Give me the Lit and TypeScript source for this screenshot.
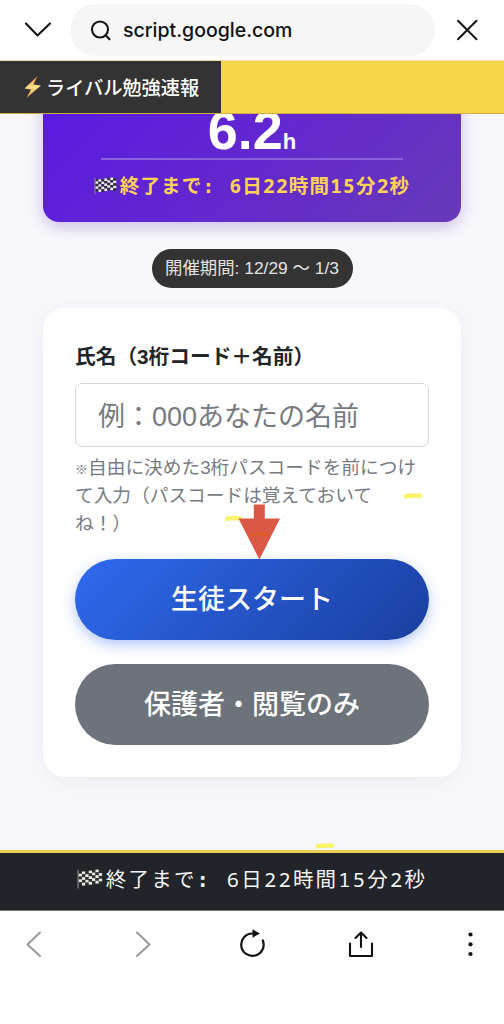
import { LitElement, html, svg, css } from "lit";
import { customElement, property } from "lit/decorators.js";

@customElement("checkered-flag")
class CheckeredFlag extends LitElement {
  static styles = css`
    :host { display: block; }
    svg { display: block; width: 100%; height: 100%; }
  `;
  render() {
    const wave = [0, 0.5, 0.4, -0.4, -1.2, -1.4, -0.7];
    const cells = [];
    for (let c = 0; c < 7; c++) {
      for (let r = 0; r < 5; r++) {
        const x = 1.5 + c * 3.1;
        const y = 2 + r * 2.8 + wave[c];
        cells.push(svg`<rect x=${x} y=${y} width="3.15" height="2.85" fill=${(c + r) % 2 ? "#e9e9e4" : "#30302f"}></rect>`);
      }
    }
    return html`<svg viewBox="0 0 24 20" preserveAspectRatio="none">
      ${cells}
      <path d="M1 1V19.5" stroke="#8b8791" stroke-width="1.1" />
    </svg>`;
  }
}

@customElement("count-down")
class CountDown extends LitElement {
  @property() label = "";
  @property() value = "";
  static styles = css`
    :host { display: flex; align-items: center; justify-content: center; white-space: pre; }
    checkered-flag { width: var(--flag-w); height: var(--flag-h); margin-right: 3px; flex: none; }
    .colon { font-family: "DejaVu Sans Mono", monospace; font-weight: 700; margin-right: 1px; }
  `;
  render() {
    return html`<checkered-flag></checkered-flag><span>${this.label}<span class="colon">: </span>${this.value}</span>`;
  }
}

@customElement("app-root")
class AppRoot extends LitElement {
  static styles = css`
    :host {
      display: block; width: 504px; height: 1024px; overflow: hidden; position: relative;
      background: #fff; color: #212529;
      font-family: "Liberation Sans", "Noto Sans CJK JP", sans-serif;
    }
    * { box-sizing: border-box; }
    .page { display: flex; flex-direction: column; height: 1024px; }
    .browser { height: 60px; flex: none; display: flex; align-items: center; padding: 0 24px; }
    .browser svg, .nav svg { display: block; flex: none; }
    .address {
      width: 365px; height: 52px; margin: 0 19px 0 19px; border-radius: 26px; background: #f6f6f6; flex: none;
      display: flex; align-items: center; gap: 12px; padding-left: 20px;
      font: 500 19.5px/52px Inter, sans-serif; color: #111;
    }
    .header { height: 54px; flex: none; background: #f8d64a; display: flex; border-top: 1px solid #eadfb0; border-bottom: 1px solid #d0ac45; }
    .brand {
      width: 221px; background: #333; color: #fff; display: flex; align-items: center; gap: 4px; padding-left: 23px;
      font-size: 19.2px; font-weight: 500; font-family: "Noto Sans CJK JP", sans-serif; white-space: nowrap;
    }
    .main { flex: none; height: 736px; overflow: hidden; background: #f8f8fc; padding: 0 43px; display: flex; flex-direction: column; align-items: center; }
    .score {
      width: 418px; height: 168px; margin-top: -60px; flex: none; border-radius: 16px; padding: 48px 58px 0;
      background: linear-gradient(135deg, #5718e5 0%, #6328ce 55%, #673ab7 100%);
      box-shadow: 0 5px 15px rgba(103, 58, 183, 0.3);
    }
    .hours { height: 58px; border-bottom: 2px solid #8b60dc; color: #fff; font-weight: 700; font-size: 54px; line-height: 56px; text-align: center; }
    .hours small { font-size: 22px; }
    .left { height: 51px; color: #ffd257; font: 700 19.5px/51px "Noto Sans Mono", "DejaVu Sans Mono", "Noto Sans CJK JP", monospace; letter-spacing: 1.2px; --flag-w: 23px; --flag-h: 18px; margin: 0 -20px; }
    .period { margin-top: 27px; width: 201px; height: 39px; border-radius: 20px; background: #333; color: #e2e2e2; font-size: 17.4px; line-height: 39px; text-align: center; white-space: nowrap; flex: none; }
    .card { margin-top: 20px; width: 418px; height: 469px; flex: none; border-radius: 22px; background: #fff; box-shadow: 0 5px 20px rgba(40, 40, 80, 0.06); padding: 32px 32px 0; }
    .label { height: 34px; line-height: 33px; font-size: 20.7px; font-weight: 700; white-space: nowrap; margin-bottom: 9px; }
    .field { height: 64px; border: 1.5px solid #d3d6da; border-radius: 7px; padding-left: 22px; padding-top: 1px; font-size: 27px; line-height: 64px; color: #777b80; white-space: nowrap; }
    .hint { margin-top: 7px; height: 84px; font-size: 18.7px; line-height: 28px; color: #777c82; white-space: pre; }
    .mark { font-size: 13px; line-height: 1; }
    .btn { height: 81px; border-radius: 41px; color: #fff; text-align: center; font-size: 27px; line-height: 78px; font-weight: 500; font-family: "Noto Sans CJK JP", sans-serif; white-space: nowrap; }
    .start { margin-top: 21px; background: linear-gradient(135deg, #2f6aee, #1a3f9f); box-shadow: 0 5px 14px rgba(47, 106, 238, 0.36); }
    .view { margin-top: 24px; background: #6c737b; }
    .footer { height: 61px; flex: none; border-top: 3px solid #efcf50; border-bottom: 1px solid #777; padding-bottom: 5px; background: #212428; color: #f4f4f4; font: 400 20.5px/52px "Noto Sans Mono", "DejaVu Sans Mono", "Noto Sans CJK JP", monospace; letter-spacing: 2.2px; --flag-w: 26px; --flag-h: 20px; }
    .nav { height: 66px; flex: none; display: flex; justify-content: space-between; align-items: center; padding: 0 19px; }
    .overlay { position: absolute; left: 0; top: 0; pointer-events: none; }
  `;

  render() {
    return html`<div class="page">
      <div class="browser">
        <svg width="27" height="16" viewBox="0 0 27 16" fill="none" stroke="#151515" stroke-width="2.1" stroke-linecap="round" stroke-linejoin="round"><path d="M2 1.5 13.5 13.5 26 1.5" /></svg>
        <div class="address">
          <svg width="21" height="21" viewBox="0 0 21 21" fill="none" stroke="#151515" stroke-width="2.1"><circle cx="10" cy="9.5" r="8" /><path d="M15.5 15 19.5 19.2" stroke-linecap="round" /></svg>
          <span>script.google.com</span>
        </div>
        <svg width="25" height="22" viewBox="0 0 25 22" fill="none" stroke="#151515" stroke-width="2" stroke-linecap="round"><path d="M4 1.8 22.5 20.2M22.5 1.8 4 20.2" /></svg>
      </div>
      <div class="header">
        <div class="brand">
          <svg width="19" height="24" viewBox="0 0 19 24"><defs><linearGradient id="b" x1="0" y1="0" x2="0" y2="1"><stop offset="0" stop-color="#d98a2e" /><stop offset=".5" stop-color="#ffe08a" /><stop offset="1" stop-color="#e09a35" /></linearGradient></defs><path d="M14.5 1 1.5 13.5 8 14.5 3.5 23 18 10.5 10.5 9.5Z" fill="url(#b)" /></svg>
          <span>ライバル勉強速報</span>
        </div>
      </div>
      <div class="main">
        <div class="score">
          <div class="hours">6.2<small>h</small></div>
          <count-down class="left" label="終了まで" value="6日22時間15分2秒"></count-down>
        </div>
        <div class="period">開催期間: 12/29 〜 1/3</div>
        <div class="card">
          <div class="label">氏名（3桁コード＋名前）</div>
          <div class="field">例：000あなたの名前</div>
          <div class="hint"><span class="mark">※</span>自由に決めた3桁パスコードを前につけ
て入力（パスコードは覚えておいて
ね！）</div>
          <div class="btn start">生徒スタート</div>
          <div class="btn view">保護者・閲覧のみ</div>
        </div>
      </div>
      <count-down class="footer" label="終了まで" value="6日22時間15分2秒"></count-down>
      <div class="nav">
        <svg width="30" height="30" viewBox="0 0 30 30" fill="none" stroke="#999" stroke-width="2" stroke-linecap="round" stroke-linejoin="round"><path d="M21 3.5 8.5 15.5 21 27" /></svg>
        <svg width="30" height="30" viewBox="0 0 30 30" fill="none" stroke="#999" stroke-width="2" stroke-linecap="round" stroke-linejoin="round"><path d="M9 3.5 21.5 15.5 9 27" /></svg>
        <svg width="30" height="30" viewBox="0 0 30 30" fill="none" stroke="#111" stroke-width="2.2" stroke-linecap="round"><path d="M15.5 4.5A11.2 11.2 0 1 0 25.8 11.5" /><path d="M15.5 0.3 23 4.5 15.5 8.7Z" fill="#111" stroke="none" /></svg>
        <svg width="30" height="30" viewBox="0 0 30 30" fill="none" stroke="#111" stroke-width="2.1" stroke-linecap="round" stroke-linejoin="round"><path d="M4 14.5V27H26V14.5M15 18V4M9.5 9 15 3.5 20.5 9" /></svg>
        <svg width="30" height="30" viewBox="0 0 30 30" fill="#111"><circle cx="15.5" cy="5.5" r="2.1" /><circle cx="15.5" cy="15.3" r="2.1" /><circle cx="15.5" cy="25" r="2.1" /></svg>
      </div>
      <svg class="overlay" width="504" height="1024" viewBox="0 0 504 1024">
        <g fill="none" stroke="#fbf36c" stroke-linecap="round" stroke-width="4.5">
          <path d="M406 496.3Q413 495 420 495.8" /><path d="M227 518.7Q233 517.5 240 518.2" /><path d="M318 846.3Q325 845 332 845.8" />
        </g>
        <path d="M253.8 504.5H264.8V518.5H280L259.4 559.5 238.5 518.5H253.8Z" fill="#da5845" />
        <path d="M251 535Q259 533 267 534.5" fill="none" stroke="#de5b2b" stroke-width="3.5" stroke-linecap="round" />
      </svg>
    </div>`;
  }
}
